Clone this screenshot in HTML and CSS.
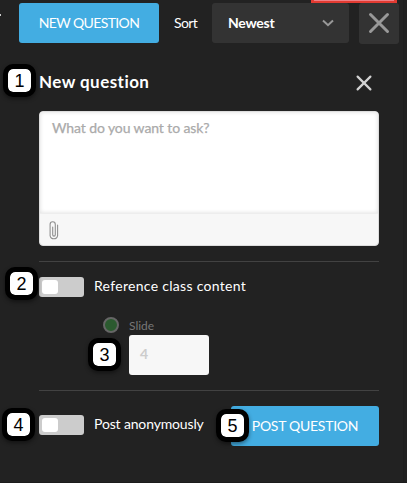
FILE: index.html
```
<!DOCTYPE html>
<html lang="en">
<head>
<meta charset="utf-8">
<title>New question</title>
<link rel="stylesheet" href="styles.css">
</head>
<body>
<main class="panel">
  <header class="toolbar">
    <span class="stray"></span>
    <button class="btn new-btn"><span class="t-new">NEW QUESTION</span></button>
    <span class="sort">Sort</span>
    <button class="select"><span class="t-newest">Newest</span>
      <svg width="14" height="10" viewBox="0 0 14 10"><path d="M2 2.5 7 7.2 12 2.5" fill="none" stroke="#999" stroke-width="2"/></svg>
    </button>
    <button class="close-box"><svg width="22" height="22" viewBox="0 0 22 22"><path d="M2.5 2.5 19.5 19.5M19.5 2.5 2.5 19.5" stroke="#999" stroke-width="3" stroke-linecap="round"/></svg></button>
    <i class="alert"></i>
  </header>
  <section class="form">
    <div class="title-row">
      <h1>New question</h1>
      <svg width="16" height="16" viewBox="0 0 16 16"><path d="M1.6 1.6 14.4 14.4M14.4 1.6 1.6 14.4" stroke="#d2d2d2" stroke-width="2.2" stroke-linecap="round"/></svg>
      <b class="badge b1">1</b>
    </div>
    <div class="editor">
      <div class="entry"><span class="t-ask">What do you want to ask?</span></div>
      <div class="attach"><svg width="10" height="20" viewBox="0 0 10 20"><path d="M8.6 4v10.6a3.8 3.8 0 0 1-7.5 0V3.4a2.6 2.6 0 0 1 5.2 0v10.4a1.3 1.3 0 0 1-2.6 0V6" fill="none" stroke="#8f8f8f" stroke-width="1.1" stroke-linecap="round"/></svg></div>
    </div>
    <div class="row reference">
      <span class="toggle"></span><span class="t-ref">Reference class content</span>
      <b class="badge b2">2</b>
    </div>
    <div class="slide">
      <span class="radio"></span>
      <div class="slide-field">
        <label class="t-slide">Slide</label>
        <div class="number">4</div>
      </div>
      <b class="badge b3">3</b>
    </div>
    <div class="row post">
      <span class="toggle"></span><span class="t-anon">Post anonymously</span>
      <button class="btn post-btn"><span class="t-post">POST QUESTION</span></button>
      <b class="badge b4">4</b>
      <b class="badge b5">5</b>
    </div>
  </section>
</main>
</body>
</html>
```

FILE: styles.css
```
* { box-sizing: border-box; }
body { margin: 0; background: #222; color: #fff; font: 14px/20px Lato, "Open Sans", sans-serif; overflow: hidden; }
button { border: 0; padding: 0; margin: 0; font: inherit; color: #fff; }
svg { display: block; flex: none; }
span, label, h1 { white-space: nowrap; }
.panel { width: 407px; height: 483px; border-bottom: 1px solid #1b1b1b; background: linear-gradient(90deg, transparent 403px, #1e1e1e 403px, #1e1e1e 404px, #202020 404px); }
.toolbar { position: relative; display: flex; height: 44px; padding-top: 3px; }
.stray { width: 1px; height: 2px; margin: 11px 18px 0 0; background: #ccc; }
.btn { background: #43ade2; border-radius: 3px; height: 40px; display: flex; align-items: center; justify-content: center; }
.new-btn { width: 140px; }
.t-new { letter-spacing: -.62px; }
.sort { width: 38px; margin: 10px 0 0 15px; letter-spacing: -.6px; }
.select { width: 137px; height: 40px; background: #333; border-radius: 3px; display: flex; align-items: center; justify-content: space-between; padding: 0 14px 0 16px; font-weight: bold; }
.t-newest { letter-spacing: -.25px; }
.close-box { width: 40px; height: 41px; margin-left: 10px; background: #333; border-radius: 3px; display: flex; align-items: center; justify-content: center; padding-bottom: 2px; }
.alert { position: absolute; left: 311px; top: 0; width: 86px; height: 3px; border: solid #e23b32; border-width: 0 3px 2px; background-color: #ef7f86; }
.form { width: 340px; margin-left: 39px; }
.title-row { position: relative; display: flex; align-items: center; justify-content: space-between; height: 67px; padding: 11px 7px 0 0; }
h1 { margin: -2px 0 0; font-size: 17px; line-height: 24px; font-weight: bold; letter-spacing: .45px; }
.editor { height: 135px; border-radius: 4px; overflow: hidden; background: #f7f7f7; border: 1px solid #ddd; }
.entry { height: 102px; padding: 6px 12px; color: #aaa; background: #fff; box-shadow: inset 0 0 4px #ddd; border-bottom: 1px solid #ededed; }
.t-ask { letter-spacing: -.1px; -webkit-text-stroke: .25px #aaa; }
.attach { padding: 7px 9px; }
.row { position: relative; display: flex; align-items: center; border-top: 1px solid #424242; }
.reference { margin-top: 15px; height: 52px; padding-bottom: 1px; }
.t-ref { letter-spacing: .3px; margin-top: -2px; }
.toggle { width: 45px; height: 20px; margin-right: 10px; padding: 3px; background: #ccc; border-radius: 3px; }
.toggle::before { content: ""; display: block; width: 16px; height: 14px; border-radius: 3px; background: #fff; }
.slide { position: relative; display: flex; height: 77px; padding: 4px 0 0 64px; }
.radio { width: 16px; height: 16px; border: 2px solid #666; border-radius: 50%; background: #2b5a2f; margin-right: 10px; }
.slide-field { width: 80px; }
.t-slide { display: block; height: 18px; line-height: 17px; font-size: 12px; color: #777; }
.number { height: 40px; border-radius: 3px; background: #f7f7f7; color: #ccc; padding-left: 11px; line-height: 38px; font-weight: bold; }
.post { height: 72px; padding-bottom: 2px; }
.post .toggle { position: relative; top: -1px; }
.t-anon { letter-spacing: -.15px; margin-top: -3px; }
.post-btn { width: 148px; margin-left: auto; }
.t-post { letter-spacing: -.27px; }
.badge { position: absolute; width: 33px; height: 33px; border: 5px solid #000; border-radius: 10px; background: #fff; color: #000; font: 18px/24px "Liberation Sans", sans-serif; text-align: center; box-shadow: 0 2px 4px rgba(0,0,0,.45); background-clip: padding-box; }
.b1 { left: -36px; top: 20px; }
.b2 { left: -34px; top: 5px; }
.b3 { left: 49px; top: 25px; }
.b4 { left: -37px; top: 17px; }
.b5 { left: 177px; top: 18px; }
```
